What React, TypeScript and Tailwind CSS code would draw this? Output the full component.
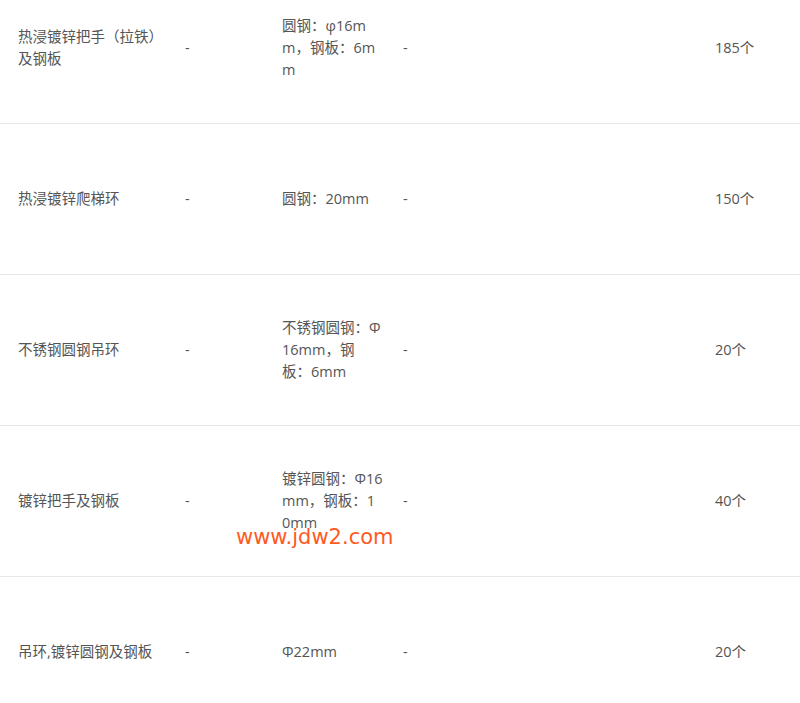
import React from "react";

const rows = [
  { name: "热浸镀锌把手（拉铁）及钢板", spec: ["圆钢：φ16m", "m，钢板：6m", "m"], qty: "185个" },
  { name: "热浸镀锌爬梯环", spec: ["圆钢：20mm"], qty: "150个" },
  { name: "不锈钢圆钢吊环", spec: ["不锈钢圆钢：Φ", "16mm，钢", "板：6mm"], qty: "20个" },
  { name: "镀锌把手及钢板", spec: ["镀锌圆钢：Φ16", "mm，钢板：1", "0mm"], qty: "40个" },
  { name: "吊环,镀锌圆钢及钢板", spec: ["Φ22mm"], qty: "20个" },
];

const App: React.FC = () => {
  return (
    <div
      className="relative w-[800px] h-[703px] overflow-hidden bg-white text-[14.5px] leading-[22px] text-[#555]"
      style={{ fontFamily: '"Open Sans", "Noto Sans CJK SC", sans-serif' }}
    >
      <div className="-mt-[27px]">
        {rows.map((row) => (
          <div
            key={row.name}
            className="grid grid-cols-[167px_97px_121px_312px_1fr] items-center h-[151px] border-b border-[#e8e8e8]"
          >
            <div className="pl-[18px] break-all">{row.name}</div>
            <div className="pl-[18px]">-</div>
            <div className="pl-[18px] whitespace-nowrap">
              {row.spec.map((line) => (
                <div key={line}>{line}</div>
              ))}
            </div>
            <div className="pl-[18px]">-</div>
            <div className="pl-[18px]">{row.qty}</div>
          </div>
        ))}
      </div>
      <div
        className="absolute left-[236px] top-[524px] text-[21px] leading-[27px] text-[#ff5a1f]"
        style={{ fontFamily: '"DejaVu Sans", sans-serif' }}
      >
        www.jdw2.com
      </div>
    </div>
  );
};

export default App;
